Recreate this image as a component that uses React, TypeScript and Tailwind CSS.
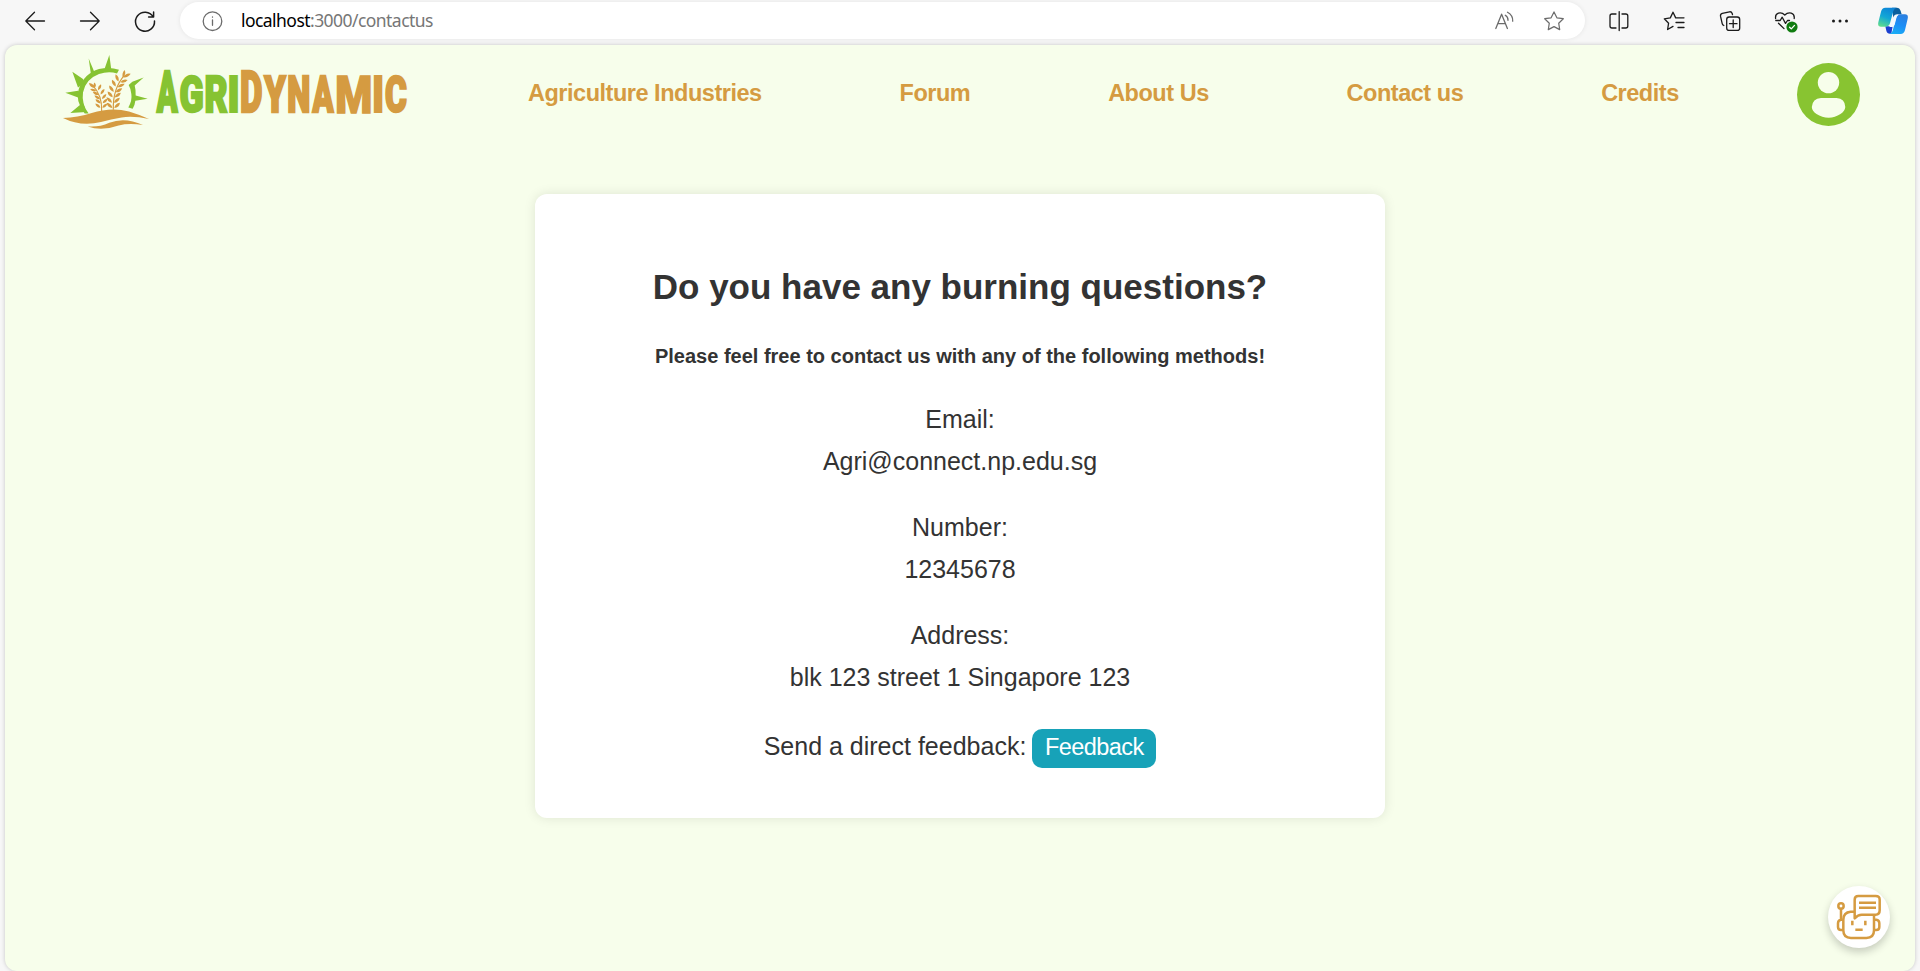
import React, { useMemo } from "react";

const NAV = ["Agriculture Industries", "Forum", "About Us", "Contact us", "Credits"];

const DETAILS = [
  ["Email:", "Agri@connect.np.edu.sg"],
  ["Number:", "12345678"],
  ["Address:", "blk 123 street 1 Singapore 123"],
];

function Stroke({ children, className = "", color = "#1b1b1b", sw = 1.3 }: { children: React.ReactNode; className?: string; color?: string; sw?: number }) {
  return (
    <svg width="20" height="20" viewBox="0 0 20 20" fill="none" stroke={color} strokeWidth={sw} strokeLinecap="round" strokeLinejoin="round" className={`shrink-0 overflow-visible ${className}`}>
      {children}
    </svg>
  );
}

function CopilotIcon() {
  return (
    <svg width="30" height="28" viewBox="0 0 90 84" className="shrink-0">
      <defs>
        <linearGradient id="cpA" x1="0.6" y1="0" x2="0.2" y2="1">
          <stop offset="0" stopColor="#0d84d8" />
          <stop offset="0.5" stopColor="#12a7d6" />
          <stop offset="1" stopColor="#5fdc8d" />
        </linearGradient>
        <linearGradient id="cpB" x1="0.7" y1="0" x2="0.3" y2="1">
          <stop offset="0" stopColor="#2a7fe0" />
          <stop offset="0.5" stopColor="#1b8df6" />
          <stop offset="1" stopColor="#1aaef5" />
        </linearGradient>
      </defs>
      <path d="M42 2h14q9 0 12 10l3 10H58q-9 0-12 10z" fill="#0a5f9e" />
      <path d="M22 58h22l-4 22h-4q-9 0-11-9z" fill="#1c3fd0" />
      <path d="M22 2h34q-7 1-10 10L36 49q-3 10-13 10H9Q-2 59 1 46L9 14Q12 2 22 2z" fill="url(#cpA)" />
      <path d="M68 81H34q7-1 10-10l10-38q3-11 13-11h14q11 0 8 13l-8 34q-3 12-13 12z" fill="url(#cpB)" />
      <path d="M55 24q-8 3-11 13l-6 18q-1 4-6 5h11q5-1 7-7l5-19q1-6 6-10z" fill="#f2f9ff" />
    </svg>
  );
}

function BrowserBar() {
  return (
    <div className="flex h-[45px] shrink-0 items-start pl-[25px]">
      <div className="flex h-[41px] w-[155px] items-center gap-[35px]">
        <Stroke><path d="M19.500 10H.8M9.500 1.300.8 10l8.700 8.700" /></Stroke>
        <Stroke><path d="M.5 10h18.700M10.500 1.300 19.200 10l-8.700 8.700" /></Stroke>
        <Stroke sw={1.5}><path d="M18.600 1v5h-5M18.200 5.800A9.500 9.500 0 1 0 19.500 10" /></Stroke>
      </div>
      <div className="mt-[2px] flex h-[37px] w-[1405px] items-center rounded-full bg-white pr-[21px] pl-[22px] shadow-[0_0_5px_rgba(0,0,0,0.08)]">
        <Stroke color="#6b6b6b"><circle cx="10.500" cy="10.200" r="9.300" /><path d="M10.500 9v5.300M10.500 6v.2" /></Stroke>
        <div className="mb-px ml-[19px] flex-1 font-['Noto_Sans','Open_Sans',sans-serif] text-[17.500px] leading-[20px] tracking-[-0.55px] text-[#767676]"><span className="text-black">localhost</span>:3000/contactus</div>
        <Stroke color="#6b6b6b" className="mr-[29px]"><path d="M.8 17.500 6.600 3.200 12.400 17.500M2.800 12.700h7.700M10.300 4.300q3 1.800 2.700 5M12.500 1.200q5.600 3 5.200 9" /></Stroke>
        <Stroke color="#6b6b6b" sw={1.2}><path d="m10 .9 2.900 5.900 6.400.9-4.600 4.500 1 6.400-5.700-3-5.700 3 1-6.400L.7 7.700l6.400-.9z" /></Stroke>
      </div>
      <div className="ml-[24px] flex h-[42px] items-center gap-[35.300px]">
        <Stroke><path d="M7 3H3A2 2 0 0 0 1 5v10a2 2 0 0 0 2 2h4M13 3h3.800a2 2 0 0 1 2 2v10a2 2 0 0 1-2 2H13M10.200.6v19" /></Stroke>
        <Stroke><path d="M14 6.900h-2.300L9 1.200 6.300 6.900l-6 .9 4.300 4.400-1 6.300L9 15.400M14 6.800h6M12 11.500h8M14 16.500h6" /></Stroke>
        <Stroke>
          <path d="M3.800 14.500Q2.500 14 2.200 12.700L.5 5.200Q.2 3 2.300 2.300L9.500.8q2-.3 2.700 1.700l.3 1.200" />
          <rect x="6.700" y="6" width="13" height="13.400" rx="2.500" />
          <path d="M13.200 9v7.500M9.500 12.700h7.500" />
        </Stroke>
        <Stroke>
          <path d="M.6 7.500C-.2 1.500 6 .2 9.800 4 13.600.2 20 1.500 19.200 7.500M.8 9.500h4.400l2-3.300 3.300 6.200 2-2.900h2M3.500 12.300l5.500 5.300" />
          <circle cx="17" cy="16" r="5.600" fill="#107c10" stroke="none" />
          <path d="m14.600 16.200 1.700 1.700 3.200-3.500" stroke="#fff" />
        </Stroke>
        <Stroke><g fill="#1b1b1b" stroke="none"><circle cx="3.500" cy="10" r="1.500" /><circle cx="10" cy="10" r="1.500" /><circle cx="16.500" cy="10" r="1.500" /></g></Stroke>
      </div>
      <div className="ml-[28px] flex h-[42px] items-center"><CopilotIcon /></div>
    </div>
  );
}

/* Each wordmark letter: character, left edge, right edge, height, colour. */
const WORDMARK: [string, number, number, number, string][] = [
  ["A", 155.5, 179, 43.3, "#86c332"], ["G", 180, 203.3, 38.5, "#86c332"], ["R", 205.2, 227.8, 38.2, "#86c332"], ["I", 228.8, 238, 38.2, "#86c332"],
  ["D", 240.7, 262.5, 43.3, "#d59b41"], ["Y", 262.8, 286.8, 38.2, "#d59b41"], ["N", 287.8, 309.5, 38.2, "#d59b41"], ["A", 311.2, 334.8, 38.2, "#d59b41"],
  ["M", 336.5, 371, 38.2, "#d59b41"], ["I", 373.5, 382.5, 38.2, "#d59b41"], ["C", 385, 407.3, 38.5, "#d59b41"],
];

/* Measures a heavy capital at 100px and stretches it to its condensed box. */
function Letter({ ch, left, right, height, fill }: { ch: string; left: number; right: number; height: number; fill: string }) {
  const ink = useMemo(() => {
    const ctx = document.createElement("canvas").getContext("2d")!;
    ctx.font = "900 100px Roboto";
    const m = ctx.measureText(ch);
    return { l: -m.actualBoundingBoxLeft, r: m.actualBoundingBoxRight, t: m.actualBoundingBoxAscent, b: m.actualBoundingBoxDescent };
  }, [ch]);
  const s = ch === "M" ? 1.5 : 2;
  const sx = (right - left - s) / (ink.r - ink.l);
  const sy = (height - s) / (ink.t + ink.b);
  const tx = left - 55 + s / 2 - ink.l * sx;
  const ty = 68.4 - s / 2 - ink.b * sy;
  return (
    <text transform={`translate(${tx} ${ty}) scale(${sx} ${sy})`} fontSize="100" fontWeight="900" fill={fill} stroke={fill} strokeWidth={s} vectorEffect="non-scaling-stroke">
      {ch}
    </text>
  );
}

function Logo() {
  return (
    <svg width="355" height="90" viewBox="0 0 355 90" className="shrink-0 font-[Roboto,sans-serif]">
      <g transform="translate(0 0.400) scale(0.33333)">
        <g fill="#86c332">
          <path d="M89 204Q60 166 71 132 87 84 132 71 164 63 192 73L186 84Q160 76 132 86 92 101 84 141 79 176 101 204z" />
          <path d="M72 181 46 203 94 200 84 172zM69 136 31 142 71 157 78 143zM84 101 52 79 69 126 88 113zM118 80 101 39 108 88 130 84zM148 72 163 29 169 74z" />
          <path d="M221 119 232 109 266 96 239 120Q243 134 242 150L278 160 241 166Q240 178 233 190L220 186Q232 166 229 146 228 131 221 119z" />
        </g>
        <g fill="#d59b41">
          <path d="M24 218Q68 217 110 203 168 184 222 198 256 208 282 221 236 211 200 216 168 221 138 230 78 245 24 218z" />
          <path d="M98 243Q132 246 163 232 210 214 264 239 223 232 191 240 140 258 98 243z" />
          <path d="M140 197Q142 150 113 120M175 193Q173 130 208 90" fill="none" stroke="#d59b41" strokeWidth="3.500" />
          {[
            [138, 187, 0], [139, 174, -3], [137, 161, -8], [133, 148, -14], [126, 136, -24],
          ].map(([x, y, r]) => (
            <g key={y} transform={`translate(${x} ${y}) rotate(${r})`}>
              <path d="M-2 0Q-15-1-17-13-4-12-2 0z" /><path d="M4 0Q17-1 19-13 6-12 4 0z" />
            </g>
          ))}
          <path d="M119 128Q104 126 102 113 117 115 119 128zM119 127Q113 120 118 111 127 119 119 127z" />
          {[
            [174, 188, 0], [173, 172, 2], [175, 156, 6], [178, 140, 11], [184, 124, 18], [192, 109, 26],
          ].map(([x, y, r]) => (
            <g key={y} transform={`translate(${x} ${y}) rotate(${r})`}>
              <path d="M-2 0Q-17-2-19-16-4-14-2 0z" /><path d="M4 0Q19-2 21-16 6-14 4 0z" />
            </g>
          ))}
          <path d="M203 96Q200 83 209 74 215 87 203 96zM205 96Q212 82 227 85 220 97 205 96z" />
        </g>
      </g>
      {WORDMARK.map(([ch, l, r, h, fill]) => <Letter key={l} ch={ch} left={l} right={r} height={h} fill={fill} />)}
    </svg>
  );
}

function Avatar() {
  return (
    <svg width="63" height="63" viewBox="0 0 63 63" className="shrink-0">
      <circle cx="31.500" cy="31.500" r="31.500" fill="#88c431" />
      <circle cx="31.500" cy="19.600" r="10.700" fill="#f7feeb" />
      <path d="M24 35h15.500Q48 35.500 48.300 44 48 48 43.500 51 38 54.700 31.700 54.700 25 54.700 19.500 51 15 48 14.800 44 15.500 35.500 24 35z" fill="#f7feeb" />
    </svg>
  );
}

function ChatButton() {
  return (
    <button className="absolute right-[25px] bottom-[23px] flex size-[62px] items-center justify-center rounded-full bg-white shadow-[0_4px_8px_rgba(0,0,0,0.2)]">
      <svg width="46" height="46" viewBox="0 0 138 138" fill="none" stroke="#d59b41" strokeWidth="7.500" strokeLinejoin="round" className="shrink-0">
        <path d="M55 53H44Q22 55 22 77v32q0 23 23 23h46q23 0 23-23V66" />
        <path d="M20 77h-5q-9 1-9 11v11q0 9 9 9h7M116 77h5q9 1 9 11v11q0 9-9 9h-7M15 77V45" />
        <circle cx="15" cy="36" r="8" />
        <path d="M56 73V17Q56 6 67 6H119Q131 6 131 17V49Q131 62 119 62H77Q66 62 56 73z" fill="#fff" />
        <path d="M69 26h51M69 41h51M49 80v14M88 80v14M58 107h22" />
      </svg>
    </button>
  );
}

export default function App() {
  return (
    <div className="flex h-[971px] flex-col overflow-hidden bg-[#f7f7f7] font-['Liberation_Sans',Arial,sans-serif]">
      <BrowserBar />
      <main className="relative ml-[5px] w-[1910px] flex-1 rounded-xl bg-[#f7feeb] shadow-[0_0_4px_rgba(0,0,0,0.2)]">
        <header className="flex h-[90px] pr-[55px] pl-[50px]">
          <Logo />
          <nav className="mt-[34px] ml-[118px] flex flex-1 gap-[137.900px] text-[23.500px] leading-[28px] font-bold tracking-[-0.48px] whitespace-nowrap text-[#d59b41]">
            {NAV.map((n) => <a key={n}>{n}</a>)}
          </nav>
          <div className="mt-[18px]"><Avatar /></div>
        </header>
        <section className="mx-auto mt-[59px] flex h-[624px] w-[850px] flex-col items-center rounded-xl bg-white pt-[68px] text-[25px] leading-[42px] text-[#333] shadow-[0_0_12px_rgba(0,0,0,0.1)]">
          <h1 className="text-[35px] leading-[50px] font-bold">Do you have any burning questions?</h1>
          <h2 className="mt-[29px] text-[20px] leading-[30px] font-bold">Please feel free to contact us with any of the following methods!</h2>
          {DETAILS.map(([label, value], i) => (
            <div key={label} className={i === 0 ? "mt-[27px] text-center" : "mt-6 text-center"}>
              <p>{label}</p>
              <p>{value}</p>
            </div>
          ))}
          <div className="mt-[27px] flex items-start">
            <p className="mr-[6px]">Send a direct feedback:</p>
            <button className="mt-1 h-[39px] w-[124px] rounded-[10px] bg-[#17a2b8] pb-[3px] text-[23.500px] leading-[36px] tracking-[-0.550px] text-white">Feedback</button>
          </div>
        </section>
        <ChatButton />
      </main>
    </div>
  );
}
